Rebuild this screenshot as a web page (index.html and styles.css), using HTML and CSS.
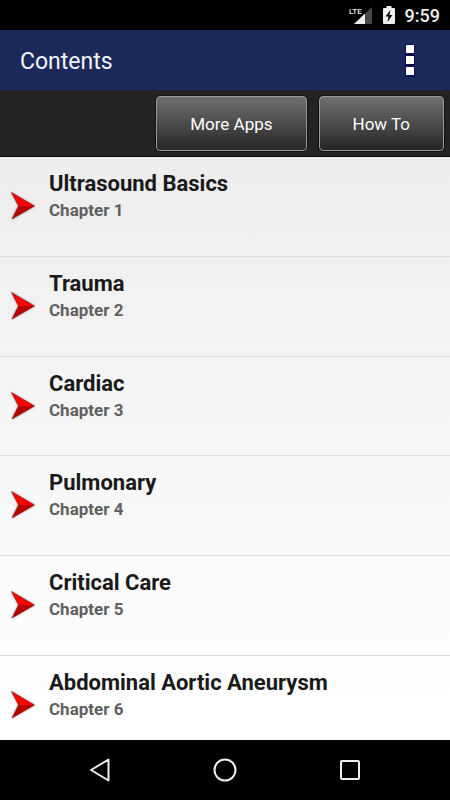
FILE: index.html
```
<!DOCTYPE html>
<html lang="en">
<head>
    <meta charset="UTF-8">
    <meta name="viewport" content="width=device-width, initial-scale=1.0">
    <title>Contents</title>
    <link rel="stylesheet" href="styles.css">
</head>
<body>
    <!-- Shared chapter arrow -->
    <svg class="defs" width="0" height="0" aria-hidden="true">
        <symbol id="arrow" viewBox="0 0 26 30">
            <path d="M1.500 1.500 24.500 15H8.500z" fill="#ff0000"/>
            <path d="M8.500 15h16L2 28z" fill="#b80000"/>
            <path d="M1.500 1.500 24.500 15 2 28 8.500 15z" fill="none" stroke="#8c0000" stroke-width=".5"/>
        </symbol>
    </svg>

    <div class="status-bar">
        <svg class="signal" width="24" height="20" viewBox="0 0 24 20" aria-hidden="true">
            <path d="M23 2v17H5z" fill="#484848"/>
            <path d="M16 8.600V19H5z" fill="#eee"/>
            <text x="0" y="9" class="lte" fill="#eee">LTE</text>
        </svg>
        <svg width="12" height="18" viewBox="0 0 12 18" aria-hidden="true">
            <path d="M3.500 0h5v2H11q1 0 1 1v14q0 1-1 1H1q-1 0-1-1V3q0-1 1-1h2.500z" fill="#eee"/>
            <path d="M7.500 4 2.500 10.500h3L4.500 16 9.500 9H6.500z" fill="#000"/>
        </svg>
        <span class="clock">9:59</span>
    </div>

    <header class="title-bar">
        <h1>Contents</h1>
        <button class="menu-button" aria-label="More options">
            <svg width="10" height="33" viewBox="0 0 10 33" aria-hidden="true">
                <path d="M0 0h10v33H0z" fill="#0c0c50"/>
                <path d="M1 1h8v8H1zM1 12h8v8H1zM1 23h8v8H1z" fill="#fff"/>
            </svg>
        </button>
    </header>

    <div class="toolbar">
        <button class="tool-button">More Apps</button>
        <button class="tool-button">How To</button>
    </div>

    <main class="chapters">
        <a class="chapter" href="#chapter1">
            <svg class="arrow"><use href="#arrow"/></svg>
            <span class="chapter-text">
                <span class="chapter-title">Ultrasound Basics</span>
                <span class="chapter-number">Chapter 1</span>
            </span>
        </a>
        <a class="chapter" href="#chapter2">
            <svg class="arrow"><use href="#arrow"/></svg>
            <span class="chapter-text">
                <span class="chapter-title">Trauma</span>
                <span class="chapter-number">Chapter 2</span>
            </span>
        </a>
        <a class="chapter" href="#chapter3">
            <svg class="arrow"><use href="#arrow"/></svg>
            <span class="chapter-text">
                <span class="chapter-title">Cardiac</span>
                <span class="chapter-number">Chapter 3</span>
            </span>
        </a>
        <a class="chapter" href="#chapter4">
            <svg class="arrow"><use href="#arrow"/></svg>
            <span class="chapter-text">
                <span class="chapter-title">Pulmonary</span>
                <span class="chapter-number">Chapter 4</span>
            </span>
        </a>
        <a class="chapter" href="#chapter5">
            <svg class="arrow"><use href="#arrow"/></svg>
            <span class="chapter-text">
                <span class="chapter-title">Critical Care</span>
                <span class="chapter-number">Chapter 5</span>
            </span>
        </a>
        <a class="chapter" href="#chapter6">
            <svg class="arrow"><use href="#arrow"/></svg>
            <span class="chapter-text">
                <span class="chapter-title">Abdominal Aortic Aneurysm</span>
                <span class="chapter-number">Chapter 6</span>
            </span>
        </a>
    </main>

    <nav class="nav-bar">
        <button class="nav-button" aria-label="Back">
            <svg width="24" height="26" viewBox="0 0 24 26"><path d="M20.500 2.500v21L3 13z"/></svg>
        </button>
        <button class="nav-button" aria-label="Home">
            <svg width="26" height="26" viewBox="0 0 26 26"><circle cx="13" cy="13" r="10.500"/></svg>
        </button>
        <button class="nav-button" aria-label="Recent apps">
            <svg width="24" height="24" viewBox="0 0 24 24"><rect x="3" y="3" width="18" height="18" rx="1"/></svg>
        </button>
    </nav>
</body>
</html>
```
FILE: styles.css
```
* {
    box-sizing: border-box;
}

body {
    margin: 0;
    height: 100vh;
    display: flex;
    flex-direction: column;
    font-family: Roboto, sans-serif;
    background: #000;
}

button {
    border: none;
    padding: 0;
    background: none;
    font-family: inherit;
    color: #fff;
    cursor: pointer;
}

svg {
    display: block;
    flex: none;
}

.defs {
    position: absolute;
}

/* Status bar */
.status-bar {
    height: 30px;
    flex: none;
    display: flex;
    justify-content: flex-end;
    align-items: center;
    gap: 10px;
    padding-right: 10px;
    color: #eee;
}

.lte {
    font-size: 8px;
    font-weight: 500;
}

.clock {
    font-size: 18px;
    font-weight: 500;
}

/* Title bar */
.title-bar {
    height: 60px;
    flex: none;
    display: flex;
    justify-content: space-between;
    align-items: center;
    padding: 0 35px 0 20px;
    background: #1b2a5b;
}

h1 {
    margin: 0;
    padding-top: 2px;
    font-size: 23px;
    font-weight: 400;
    color: #f4f4f8;
}

/* Toolbar */
.toolbar {
    height: 67px;
    flex: none;
    display: flex;
    justify-content: flex-end;
    gap: 12px;
    padding: 6px 6px 5px;
    background: #232323;
    border-bottom: 1px solid #000;
}

.tool-button {
    padding: 0 33px;
    border: 1px solid #a09a8c;
    border-radius: 4px;
    background: linear-gradient(#707070, #262626);
    box-shadow: 0 0 0 1px #111;
    font-size: 17px;
}

/* Chapter list */
.chapters {
    flex: 1;
    min-height: 0;
    display: flex;
    flex-direction: column;
    overflow: hidden;
    background: linear-gradient(#ededed, #fff 95%);
}

.chapter {
    flex: 1;
    display: flex;
    align-items: flex-start;
    gap: 13px;
    padding: 13px 10px 0;
    border-bottom: 1px solid #dcdcdc;
    text-decoration: none;
}

/* Last row is cut off by the navigation bar */
.chapter:last-child {
    flex: 0 0 84px;
    border-bottom: none;
}

.arrow {
    width: 26px;
    height: 30px;
    margin-top: 21px;
    filter: drop-shadow(0 0 1px rgba(0, 0, 0, 0.4));
}

.chapter-text {
    display: flex;
    flex-direction: column;
}

.chapter-title {
    font-size: 22px;
    line-height: 28px;
    font-weight: 700;
    color: #1a1a1a;
}

.chapter-number {
    font-size: 17px;
    line-height: 24px;
    font-weight: 700;
    color: #606060;
}

/* Navigation bar */
.nav-bar {
    height: 60px;
    flex: none;
    display: flex;
    justify-content: center;
    padding: 0 38px;
}

.nav-button {
    flex: 1;
    display: flex;
    justify-content: center;
    align-items: center;
}

.nav-button svg {
    fill: none;
    stroke: #eee;
    stroke-width: 2;
    stroke-linejoin: round;
}
```
